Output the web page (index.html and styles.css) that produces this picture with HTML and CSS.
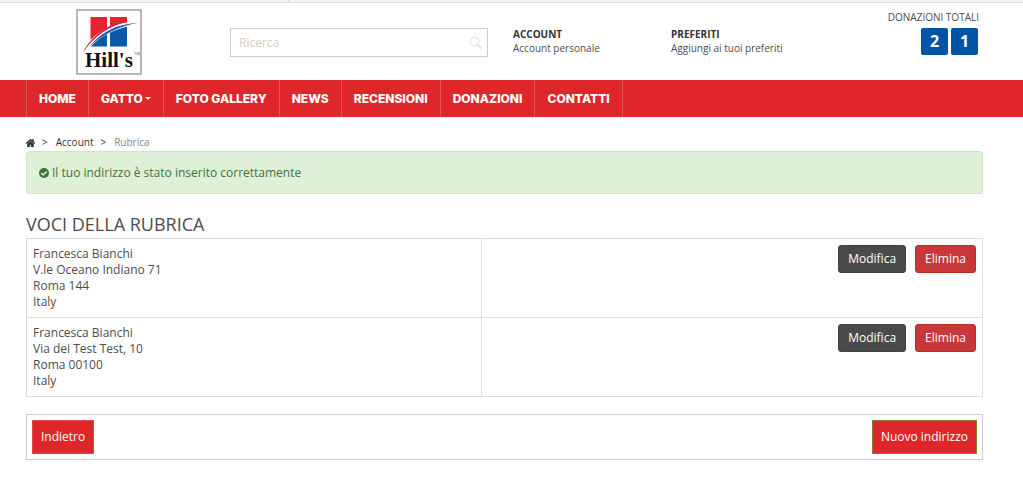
FILE: index.html
```html
<!DOCTYPE html>
<html lang="it">
<head>
<meta charset="utf-8">
<title>Rubrica</title>
<link rel="stylesheet" href="styles.css">
</head>
<body>
<div class="topbar"><span class="topbar-tab"></span></div>
<header class="header container">
  <a class="logo" href="#" aria-label="Hill's">
    <svg viewBox="0 0 66 66" width="66" height="66">
      <rect x="1" y="1" width="64" height="64" fill="#fff" stroke="#999" stroke-width="1.4"/>
      <path d="M14.500 8H31V19Q22 23 14.500 31Z" fill="#e8232f"/>
      <path d="M34 8H51V14Q42 14.500 34 17Z" fill="#e8232f"/>
      <path d="M14.500 37.500Q22 27 31 22V37.500Z M34 21Q42 17.500 51 17V37.500H34Z" fill="#0b57a8"/>
      <path d="M7 44C17 27 33 15 61 14C36 18 20 27 7 44Z" fill="#fff" stroke="#fff" stroke-width="3"/>
      <path d="M6.500 44C16 26 32 13.500 53 12.500C34 16.500 19 26 6.500 44Z" fill="#d4254b"/>
      <path d="M13 38C25 24 39 15 62 14C43 17 27 25 13 38Z" fill="#0b57a8"/>
      <text class="logo-text" x="9" y="58">Hill's</text>
      <text class="logo-tm" x="58" y="46">TM</text>
    </svg>
  </a>
  <form class="search">
    <input class="search-input" type="search" placeholder="Ricerca" aria-label="Ricerca">
    <button class="search-button" type="button" aria-label="Cerca">
      <svg viewBox="0 0 14 14" width="14" height="14" fill="none" stroke="#e8e4e2"><circle cx="5.5" cy="5.5" r="4.2" stroke-width="1.3"/><path d="M8.7 8.7L12.5 12.5" stroke-width="2"/></svg>
    </button>
  </form>
  <div class="info"><strong>ACCOUNT</strong><a href="#">Account personale</a></div>
  <div class="info"><strong>PREFERITI</strong><a href="#">Aggiungi ai tuoi preferiti</a></div>
  <div class="donations">
    <span>DONAZIONI TOTALI</span>
    <div class="digits"><b>2</b><b>1</b></div>
  </div>
</header>
<nav class="nav">
  <ul class="nav-list container">
    <li><a href="#">HOME</a></li>
    <li><a href="#">GATTO<i class="caret"></i></a></li>
    <li><a href="#">FOTO GALLERY</a></li>
    <li><a href="#">NEWS</a></li>
    <li><a href="#">RECENSIONI</a></li>
    <li><a href="#">DONAZIONI</a></li>
    <li><a href="#">CONTATTI</a></li>
  </ul>
</nav>
<main class="container">
  <div class="breadcrumb">
    <a href="#" aria-label="Home"><svg class="home" viewBox="0 0 18 16" width="9" height="8"><path d="M9 0L0 8L1.3 9.5L9 3L16.7 9.5L18 8L15 5.300V1H12.500V3Z M9 4.500L3 9.500V16H7.500V11H10.500V16H15V9.500Z" fill="#333" stroke="#333"/></svg></a>
    <span class="sep">&gt;</span><a href="#">Account</a><span class="sep">&gt;</span><span class="current">Rubrica</span>
  </div>
  <div class="alert" role="status">
    <svg viewBox="0 0 10 10" width="10" height="10"><circle cx="5" cy="5" r="5" fill="#3c763d"/><path d="M2.300 5L4.300 7L7.800 3.500" fill="none" stroke="#dff0d8" stroke-width="1.500"/></svg>
    <span>Il tuo indirizzo è stato inserito correttamente</span>
  </div>
  <h1 class="title">VOCI DELLA RUBRICA</h1>
  <table class="addresses">
    <tr>
      <td>Francesca Bianchi<br>V.le Oceano Indiano 71<br>Roma 144<br>Italy</td>
      <td><div class="row-actions"><button class="btn" type="button">Modifica</button><button class="btn btn-danger" type="button">Elimina</button></div></td>
    </tr>
    <tr>
      <td>Francesca Bianchi<br>Via dei Test Test, 10<br>Roma 00100<br>Italy</td>
      <td><div class="row-actions"><button class="btn" type="button">Modifica</button><button class="btn btn-danger" type="button">Elimina</button></div></td>
    </tr>
  </table>
  <div class="footer-actions">
    <button class="btn btn-main" type="button">Indietro</button>
    <button class="btn btn-main btn-new" type="button">Nuovo indirizzo</button>
  </div>
</main>
</body>
</html>
```
FILE: styles.css
```css
* { box-sizing: border-box; }
body {
  margin: 0;
  background: #fff;
  color: #4d4d4d;
  font: 12px/16px "Open Sans", sans-serif;
}
a { color: inherit; text-decoration: none; }
button, input { font: inherit; }
.container { margin: 0 40px 0 26px; }
.topbar {
  height: 3px;
  background: #f4f4f4;
  border-bottom: 1px solid #dcdcdc;
}
.topbar-tab {
  display: block;
  width: 29%;
  height: 2px;
  margin-left: -7px;
  border-right: 2px solid #dcdcdc;
}
.header {
  display: grid;
  grid-template-columns: 204fr 283fr 158fr 158fr 154fr;
  height: 77px;
}
.logo { padding: 6px 0 0 50px; }
.logo svg { display: block; }
.logo-text { font: bold 21px "Liberation Serif", serif; fill: #111; }
.logo-tm { font: 4px "Liberation Sans", sans-serif; fill: #555; }
.search {
  display: flex;
  height: 29px;
  margin: 25px 25px 0 0;
  border: 1px solid #ccc;
}
.search-input {
  flex: 1;
  min-width: 0;
  border: 0;
  padding: 0 8px;
  background: none;
}
.search-input::placeholder { color: #d8cbb8; opacity: 1; }
.search-button {
  display: flex;
  align-items: center;
  padding: 0 4px;
  border: 0;
  background: none;
}
.info {
  padding-top: 24px;
  font-size: 10px;
  line-height: 14px;
  white-space: nowrap;
}
.info strong { display: block; color: #333; }
.donations {
  padding: 6px 4px 0 0;
  font-size: 10px;
  text-align: right;
  white-space: nowrap;
}
.digits {
  display: flex;
  justify-content: flex-end;
  gap: 3px;
  margin: 3px 1px 0 0;
}
.digits b {
  width: 27px;
  border-radius: 2px;
  background: #0054a6;
  color: #fff;
  font-size: 16px;
  line-height: 27px;
  text-align: center;
}
.nav { background: #df262b; }
.nav-list {
  display: flex;
  padding: 0;
  list-style: none;
  border-left: 1px solid #e65155;
}
.nav-list li { border-right: 1px solid #e65155; }
.nav-list a {
  display: flex;
  align-items: center;
  padding: 0 12px;
  color: #fff;
  font: 800 12px/37px Inter, sans-serif;
  white-space: nowrap;
}
.caret {
  margin-left: 2px;
  border: 3px solid transparent;
  border-top-color: #fff;
  border-bottom: 0;
}
.breadcrumb {
  display: flex;
  align-items: center;
  padding-top: 17px;
  font-size: 10px;
  line-height: 17px;
  color: #333;
}
.home { display: block; }
.sep { margin: 0 8px 0 7px; }
.current { color: #888; }
.alert {
  display: flex;
  align-items: center;
  gap: 3px;
  height: 43px;
  padding: 0 12px;
  border: 1px solid #d0e6c1;
  border-radius: 3px;
  background: #dff0d8;
  color: #3c763d;
}
.title {
  margin: 20px 0 4px;
  font-size: 18px;
  font-weight: 400;
  line-height: 20px;
}
.addresses {
  width: 100%;
  table-layout: fixed;
  border-collapse: collapse;
}
.addresses td {
  height: 79px;
  padding: 6px;
  border: 1px solid #ddd;
  vertical-align: top;
}
.addresses td:first-child {
  width: 47.6%;
  padding-top: 7px;
}
.row-actions {
  display: flex;
  justify-content: flex-end;
  gap: 9px;
}
.btn {
  padding: 5px 9px;
  border: 1px solid #414141;
  border-radius: 3px;
  background: #4a4a4a;
  color: #fff;
}
.btn-danger { background: #c9373a; border-color: #b92c28; }
.btn-main {
  padding: 8px;
  border-color: #e0484c;
  border-radius: 0;
  background: #df262b;
}
.btn-new { border-color: #8a7a2c; }
.footer-actions {
  display: flex;
  justify-content: space-between;
  margin-top: 17px;
  padding: 5px;
  border: 1px solid #ccc;
}
```
